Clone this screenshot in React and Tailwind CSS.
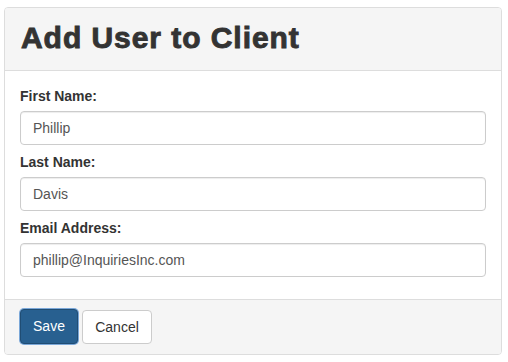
export default function App() {
  const fields = [
    { label: 'First Name:', value: 'Phillip' },
    { label: 'Last Name:', value: 'Davis' },
    { label: 'Email Address:', value: 'phillip@InquiriesInc.com' },
  ];

  return (
    <div className="w-[508px] h-[362px] bg-white pt-[7px] pl-[4px] font-['Liberation_Sans',Arial,sans-serif] text-[#333]">
      <div className="w-[498px] border border-[#ddd] rounded-[4px] overflow-hidden">
        {/* Header */}
        <div className="bg-[#f5f5f5] border-b border-[#ddd] h-[63px] pl-[16px] pt-[13px]">
          <h1 className="text-[30px] leading-[33px] font-bold tracking-[0.95px] text-[#333] [-webkit-text-stroke:0.9px_#333]">Add User to Client</h1>
        </div>

        {/* Body */}
        <div className="px-[15px] pt-[15px] pb-[15px]">
          {fields.map((f) => (
            <div key={f.label} className="mb-[7px]">
              <label className="block text-[14px] leading-[20px] font-bold mb-[5px]">{f.label}</label>
              <input
                readOnly
                value={f.value}
                className="block w-full h-[34px] px-[12px] border border-[#ccc] rounded-[4px] text-[14px] text-[#555] bg-white outline-none shadow-[inset_0_1px_1px_rgba(0,0,0,0.075)]"
              />
            </div>
          ))}
        </div>

        {/* Footer */}
        <div className="bg-[#f5f5f5] border-t border-[#ddd] h-[55px] pl-[15px] pt-[9px] flex items-start gap-[4px]">
          <button className="h-[35px] w-[58px] rounded-[4px] bg-[#286090] border border-[#204d74] text-white text-[14px] ring-1 ring-[#7aa7d8]">
            Save
          </button>
          <button className="h-[34px] w-[70px] mt-[1px] rounded-[4px] bg-white border border-[#ccc] text-[#333] text-[14px]">
            Cancel
          </button>
        </div>
      </div>
    </div>
  );
}
